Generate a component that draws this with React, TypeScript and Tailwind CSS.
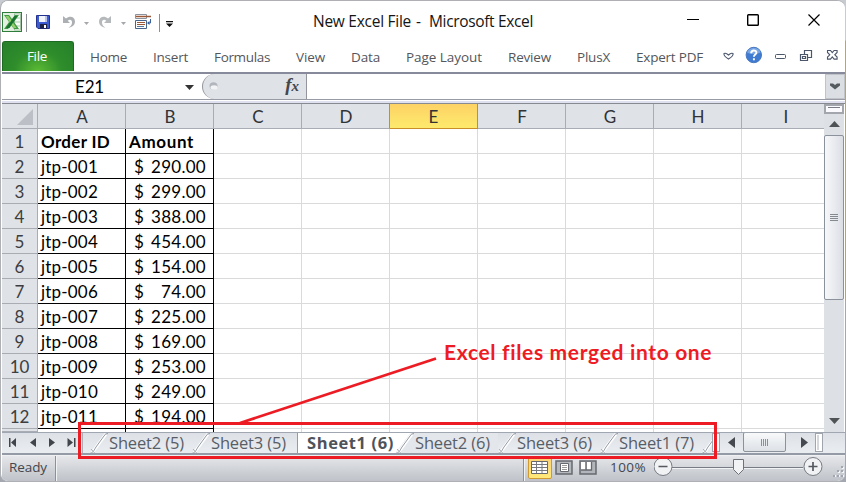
import { useLayoutEffect, useRef } from "react";
import type { ReactNode } from "react";

/** Single-line text, tracked so that it fills a fixed width. */
function Fit({ width, className = "", children }: { width: number; className?: string; children: string }) {
  const ref = useRef<HTMLSpanElement>(null);
  useLayoutEffect(() => {
    const el = ref.current;
    if (!el) return;
    el.style.letterSpacing = "0px";
    const natural = el.getBoundingClientRect().width;
    el.style.letterSpacing = `${(width - natural) / children.length}px`;
  }, [width, children]);
  return (
    <span className="block shrink-0 whitespace-nowrap" style={{ width }}>
      <span ref={ref} className={`inline-block whitespace-pre ${className}`}>
        {children}
      </span>
    </span>
  );
}

const UI = "font-['Open_Sans','Noto_Sans',sans-serif]";
const CELL = "font-['Lato',sans-serif]";

function Divider({ className = "" }: { className?: string }) {
  return <span className={`h-[18px] w-px bg-[#8d9096] ${className}`} />;
}

function TitleBar() {
  return (
    <div className="flex h-10 shrink-0 items-start bg-white">
      <svg className="mt-[11px] h-5 w-5" viewBox="0 0 20 20">
        <rect x=".5" y=".5" width="19" height="19" fill="#e3efe0" stroke="#2e7d3b" />
        <rect x="12.5" y="2" width="6" height="16" fill="#f8fcf7" stroke="#8fb893" strokeWidth=".8" />
        <path d="M13 6h5M13 10h5M13 14h5" stroke="#a9c9ab" />
        <path d="M2 3h5l3 4 3-4h4l-5 7 5 7h-5l-3-4-3 4H2l5-7z" fill="#3f9a45" />
        <path d="M3.500 4h3l8 12h-3z" fill="#95cf6c" />
        <path d="M12.500 4h3l-8 12H4z" fill="#17732f" />
      </svg>
      <Divider className="mt-[13px] ml-1" />
      <svg className="mt-[14px] ml-[9px] h-[14px] w-[14px]" viewBox="0 0 14 14">
        <path d="M.5.5h13v13H2L.5 12z" fill="#3c5bd0" stroke="#23328c" />
        <path d="M3 1h8v6H3z" fill="#f3f5fc" />
        <path d="M9 1h2v6H9z" fill="#b9c4ee" />
        <path d="M4 9h7v4.500H4z" fill="#1e2448" />
        <path d="M8 10h2v3H8z" fill="#fff" />
      </svg>
      <svg className="mt-[14px] ml-[13px] h-[14px] w-[12px]" viewBox="0 0 12 14">
        <path d="M0 1v7h7L4.700 5.700C7 3.500 9.500 5 9 8c-.3 2-1.500 3.500-3.500 4.500C9 12.500 12 10 12 6.500 12 2 7 .2 3 3.500z" fill="#adb0b3" />
      </svg>
      <svg className="mt-[21px] ml-[9px] h-[3px] w-[5px]" viewBox="0 0 5 3"><path d="M0 0h5L2.500 3z" fill="#a5a7aa" /></svg>
      <svg className="mt-[14px] ml-[10px] h-[14px] w-[12px]" viewBox="0 0 12 14">
        <path d="M12 1v7H5l2.300-2.300C5 3.500 2.500 5 3 8c.3 2 1.500 3.500 3.500 4.500C3 12.500 0 10 0 6.500 0 2 5 .2 9 3.500z" fill="#b6b9bc" />
      </svg>
      <svg className="mt-[21px] ml-[10px] h-[3px] w-[5px]" viewBox="0 0 5 3"><path d="M0 0h5L2.500 3z" fill="#a5a7aa" /></svg>
      <svg className="mt-[13px] ml-[9px] h-4 w-[17px]" viewBox="0 0 17 16">
        <path d="M.5.5h11v4H.5z" fill="#fff" stroke="#89929f" />
        <path d="M1 2.500h15" stroke="#9b5937" strokeWidth="1.400" />
        <path d="M.5 6.500h11v8H.5z" fill="#fff" stroke="#46648c" />
        <path d="M2 8.500h8M2 10.500h8" stroke="#9b5937" />
        <path d="M2 12.500h7" stroke="#56789f" />
        <path d="M15.500 5v4h-2" fill="none" stroke="#3b629b" />
        <path d="M12 9l2.500-2v4z" fill="#3b629b" />
      </svg>
      <Divider className="mt-[13px] ml-[7px]" />
      <svg className="mt-5 ml-[6px] h-[6px] w-[7px]" viewBox="0 0 7 6">
        <path d="M0 0h7v1.200H0zM0 2.500h7L3.500 6z" fill="#111" />
      </svg>
      <div className={`mt-[8px] ml-[140px] flex text-[15.500px] leading-6 text-[#151515] ${UI}`}>
        <Fit width={98}>New Excel File</Fit>
        <span className="ml-[5px] w-[13px]">-</span>
        <Fit width={104}>Microsoft Excel</Fit>
      </div>
      <svg className="mt-[12px] ml-[154px] h-[14px] w-[134px]" viewBox="0 0 134 14" fill="none" stroke="#000">
        <path d="M0 6.500h12" />
        <rect x="60.700" y="1.700" width="10.600" height="10.600" rx=".8" strokeWidth="1.400" />
        <path d="M121.500 1.500l11 11M132.500 1.500l-11 11" strokeWidth="1.200" />
      </svg>
    </div>
  );
}

const menus: [string, number][] = [
  ["Home", 37], ["Insert", 35], ["Formulas", 56], ["View", 29], ["Data", 29],
  ["Page Layout", 76], ["Review", 43], ["PlusX", 33], ["Expert PDF", 67],
];

function MenuRow() {
  return (
    <div className={`flex h-[31px] shrink-0 bg-white text-[13.500px] leading-[32px] ${UI}`}>
      <div className="flex h-[30px] w-[72px] justify-center rounded-t-[3px] border border-b-0 border-[#1d6b22] bg-[radial-gradient(ellipse_at_bottom,#5cba35_0%,#2f8d2b_48%,#26802a_100%)] pr-[2px] leading-[29px] text-white">
        <Fit width={20} className="font-medium">File</Fit>
      </div>
      <div className="ml-4 flex gap-[26px] text-[#54565b]">
        {menus.map(([name, w]) => (
          <Fit key={name} width={w}>{name}</Fit>
        ))}
      </div>
      <svg className="ml-[19px] h-[31px] w-[118px]" viewBox="722 41 118 31" fill="none" stroke="#4c566b">
        <path d="M724 53.500c2-1 3 0 4.500 1.500 1.500-1.500 2.500-2.500 4.500-1.500.6 2-2 4-4.500 5.500-2.500-1.500-5-3.500-4.500-5.500z" strokeWidth="1.100" />
        <circle cx="753.800" cy="55" r="7.700" fill="#3f7bd0" stroke="#4878c0" />
        <path d="M747 52.500a7 6 0 0 1 13.600 0q-7 3-13.600 0" fill="#79a7e6" stroke="none" />
        <path d="M751.200 53.200c0-3.600 5.400-3.400 5.200-.4-.1 1.700-2.500 1.800-2.500 4M753.900 58.300v1.900" stroke="#fff" strokeWidth="1.900" />
        <rect x="775.500" y="54.500" width="10" height="4" rx="1" />
        <path d="M804.500 54.500v-4h7v7h-4M800.500 54.500h7v6h-7zM802.500 56.500h3v2h-3z" strokeWidth="1.200" />
        <path d="M827.500 50.500h3l1.800 2.200 1.800-2.200h3v2l-2.300 2.300 2.300 2.300v2h-3l-1.800-2.200-1.800 2.200h-3v-2l2.300-2.300-2.300-2.300z" strokeWidth="1.100" />
      </svg>
    </div>
  );
}

function FormulaBar() {
  return (
    <>
      <div className="h-[2px] shrink-0 bg-[#878a9b]" />
      <div className="flex h-[25px] shrink-0 bg-white">
        <div className={`ml-[73px] w-[110px] text-[17px] leading-[26px] text-black ${CELL}`}>
          <Fit width={29}>E21</Fit>
        </div>
        <svg className="mt-[11px] h-[5px] w-[9px]" viewBox="0 0 9 5"><path d="M0 0h9L4.500 5z" fill="#333" /></svg>
        <div className="ml-2 flex w-[105px] justify-between rounded-l-full border-r border-l border-[#92969c] bg-[#dfe2e7]">
          <svg className="mt-2 ml-[6px] h-2 w-[9px]" viewBox="0 0 9 8">
            <ellipse cx="4.500" cy="4" rx="4" ry="3.700" fill="#b2b6bc" />
            <ellipse cx="5" cy="5.500" rx="3.500" ry="2.300" fill="#f1f3f5" />
          </svg>
          <span className="mr-[7px] font-['Liberation_Serif',serif] text-[19px] leading-[22px] font-bold text-[#44474b] italic">
            f<span className="text-[15px]">x</span>
          </span>
        </div>
        <div className="flex-1" />
        <div className="flex w-[20px] items-center justify-center border border-[#c0c4ca] bg-[#dbdfe4]">
          <svg className="h-[7px] w-[10px]" viewBox="0 0 10 7"><path d="M0 .5h3L5 2l2-1.500h3v2L5 6.500 0 2.500z" fill="#555a5e" /></svg>
        </div>
      </div>
      <div className="h-px shrink-0 bg-[#989ba3]" />
      <div className="h-px shrink-0 bg-white" />
      <div className="h-[2px] shrink-0 bg-[#dfe0f0]" />
      <div className="h-px shrink-0 bg-[#878a90]" />
    </>
  );
}

const columns = ["A", "B", "C", "D", "E", "F", "G", "H", "I"];
const amounts = [
  "290.00", "299.00", "388.00", "454.00", "154.00", "74.00",
  "225.00", "169.00", "253.00", "249.00", "194.00",
];

function Row({ index }: { index: number }) {
  const last = index === 13;
  const amount = amounts[index - 2];
  return (
    <div className={`flex shrink-0 text-[17px] leading-[26px] ${CELL} ${last ? "h-[3px] overflow-hidden" : "h-[25px]"}`}>
      <div className="w-9 shrink-0 border-r border-b border-[#a9adb3] bg-[#dfe2e7] text-center text-[#3c3d40]">
        {last ? "" : index}
      </div>
      <div className={`w-[88px] shrink-0 border-r border-black pl-[3px] text-black ${last ? "" : "border-b"}`}>
        {index === 1 ? <Fit width={69} className="font-bold">Order ID</Fit> : !last && <Fit width={57}>{`jtp-${String(index - 1).padStart(3, "0")}`}</Fit>}
      </div>
      <div className={`flex w-[88px] shrink-0 border-r border-black text-black ${last ? "" : "border-b"}`}>
        {index === 1 ? (
          <span className="pl-[3px]"><Fit width={65} className="font-bold">Amount</Fit></span>
        ) : !last && (
          <>
            <span className="w-[9px] flex-1 pl-2">$</span>
            <Fit width={amount.length === 5 ? 45 : 55}>{amount}</Fit>
            <span className="w-[7px]" />
          </>
        )}
      </div>
      {columns.slice(2).map((c) => (
        <div key={c} className={`shrink-0 border-[#d9dadc] ${last ? "" : "border-b"} ${c === "I" ? "w-[82px]" : "w-[88px] border-r"}`} />
      ))}
    </div>
  );
}

function VerticalScroll() {
  return (
    <div className="flex w-[20px] shrink-0 flex-col items-center bg-[#dde1e6]">
      <div className="flex h-[10px] w-full justify-center border-2 border-[#a3a6ad] bg-[#fafaff]">
        <span className="mt-px h-px w-3 bg-[#777c88]" />
      </div>
      <svg className="mt-[7px] h-[6px] w-[11px]" viewBox="0 0 11 6"><path d="M5.500 0L11 6H0z" fill="#505356" /></svg>
      <div className="mt-2 flex h-[165px] w-full flex-col items-center justify-center gap-px rounded-[2px] border border-[#8c929b] bg-gradient-to-r from-[#f7f8fa] to-[#dbdfe5]">
        <i className="h-px w-2 bg-[#858990]" />
        <i className="h-px w-2 bg-[#858990]" />
        <i className="h-px w-2 bg-[#858990]" />
        <i className="h-px w-2 bg-[#858990]" />
      </div>
      <svg className="mt-[118px] h-[6px] w-[11px]" viewBox="0 0 11 6"><path d="M0 0h11L5.500 6z" fill="#505356" /></svg>
    </div>
  );
}

function Sheet() {
  return (
    <div className="flex h-[328px] shrink-0 bg-white">
      <div className="flex w-[822px] flex-col overflow-hidden">
        <div className={`flex h-[25px] shrink-0 text-center text-[17px] leading-[26px] text-[#303236] ${CELL}`}>
          <div className="flex w-9 items-end justify-end border-r border-b border-[#a9adb3] bg-[#dfe2e7] pr-1 pb-[3px]">
            <svg className="h-4 w-4" viewBox="0 0 16 16"><path d="M16 0v16H0z" fill="#bcc0c6" /></svg>
          </div>
          {columns.map((c) => (
            <div
              key={c}
              className={
                c === "E"
                  ? "w-[88px] border-r border-b border-[#c98e27] bg-gradient-to-b from-[#fdd266] to-[#fdea6c]"
                  : `border-b bg-[#dfe2e7] ${c === "I" ? "w-[82px] border-[#a9adb3] pl-[6px]" : c === "D" ? "w-[88px] border-r border-r-[#c98e27] border-b-[#a9adb3] pl-px" : "w-[88px] border-r border-[#a9adb3] pl-px"}`
              }
            >
              {c}
            </div>
          ))}
        </div>
        {Array.from({ length: 13 }, (_, i) => <Row key={i} index={i + 1} />)}
      </div>
      <VerticalScroll />
    </div>
  );
}

function Slant() {
  return (
    <svg className="h-[21px] w-[19px] shrink-0" viewBox="0 0 19 21" fill="none">
      <path d="M2 20L16 1" stroke="#fff" strokeWidth="3" />
      <path d="M0 20.500C4 19 4 17 6 14l8-11q1-2.500 4-2.500" stroke="#949aa4" />
      <path d="M1 16l4 4.500" stroke="#a9afb8" />
    </svg>
  );
}

function SheetTab({ name, beforeActive = false, afterActive = false }: { name: string; beforeActive?: boolean; afterActive?: boolean }) {
  return (
    <div className={`flex shrink-0 ${beforeActive ? "w-[106px] border-r border-[#949aa4]" : "w-[102px]"} ${afterActive ? "bg-[linear-gradient(127deg,#fff_11px,#e3e6eb_12px)]" : ""}`}>
      <Slant />
      <Fit width={75}>{name}</Fit>
    </div>
  );
}

function ScrollStop() {
  return (
    <span className="h-[19px] w-[8px] border border-[#a0a5ad] bg-white p-px">
      <i className="block h-full w-full border-l-2 border-[#d4d8dd]" />
    </span>
  );
}

function TabStrip() {
  return (
    <>
      <div className={`flex h-[21px] shrink-0 overflow-hidden border-t border-[#a1a7b0] bg-gradient-to-b from-[#dde1e7] to-[#eaedf0] text-[16.500px] leading-[20px] text-[#585e68] ${UI}`}>
        <svg className="h-5 w-[80px] shrink-0" viewBox="2 433 80 20" fill="#42464c">
          <path d="M9 438h1.500v9H9zM16 438v9l-5-4.500zM36 438v9l-6-4.500zM49 438v9l6-4.500zM67.500 438v9l5.500-4.500zM74 438h1.500v9H74z" />
        </svg>
        <span className="w-2 border-l border-[#a9afb7]" />
        <SheetTab name="Sheet2 (5)" />
        <SheetTab name="Sheet3 (5)" beforeActive />
        <div className="-mt-px h-[21px] w-[98px] shrink-0 bg-white pt-px pl-[9px] font-bold text-[#4e5259]">
          <Fit width={87}>Sheet1 (6)</Fit>
        </div>
        <SheetTab name="Sheet2 (6)" afterActive />
        <SheetTab name="Sheet3 (6)" />
        <SheetTab name="Sheet1 (7)" />
        <span className="w-[10px] overflow-hidden"><Slant /></span>
        <ScrollStop />
        <svg className="mt-[4px] ml-2 h-[11px] w-[7px] shrink-0" viewBox="0 0 7 11"><path d="M7 0v11L0 5.500z" fill="#464a50" /></svg>
        <div className="-mt-px ml-[8px] flex h-[20px] w-[43px] shrink-0 items-center justify-center gap-px rounded-[2px] border border-[#8c929b] bg-gradient-to-b from-[#f8f9fa] to-[#dde1e6]">
          <i className="h-[7px] w-px bg-[#8b9097]" />
          <i className="h-[7px] w-px bg-[#8b9097]" />
          <i className="h-[7px] w-px bg-[#8b9097]" />
          <i className="h-[7px] w-px bg-[#8b9097]" />
        </div>
        <svg className="mt-[4px] ml-[15px] h-[11px] w-[7px] shrink-0" viewBox="0 0 7 11"><path d="M0 0v11l7-5.500z" fill="#464a50" /></svg>
        <span className="w-[7px]" />
        <ScrollStop />
      </div>
      <div className="h-[2px] shrink-0 bg-[#949ba6]" />
      <div className="h-px shrink-0 bg-[#eef0f2]" />
    </>
  );
}

function ViewButton({ children, active = false }: { children: ReactNode; active?: boolean }) {
  return (
    <span className={`flex h-[23px] w-6 shrink-0 items-center justify-center ${active ? "rounded-[2px] border border-[#d19a31] bg-gradient-to-b from-[#fbd277] to-[#ffe87a]" : ""}`}>
      <svg className="h-[15px] w-[18px]" viewBox="0 0 18 15" fill="none">{children}</svg>
    </span>
  );
}

function StatusBar() {
  return (
    <div className={`flex h-[25px] shrink-0 bg-gradient-to-b from-[#e5e7ea] to-[#bfc3c9] text-[13.500px] leading-[23px] text-[#44474d] ${UI}`}>
      <span className="ml-[7px]"><Fit width={38}>Ready</Fit></span>
      <span className="ml-[8px] h-[25px] w-[2px] border-l border-[#8c9198] bg-[#f1f2f3]" />
      <span className="ml-[466px] h-[25px] w-[2px] border-l border-[#8c9198] bg-[#f1f2f3]" />
      <span className="ml-[3px] flex">
        <ViewButton active>
          <path d="M.5 1.500h16v12H.5z" fill="#fff" stroke="#65686d" />
          <path d="M1 4.500h15M1 7.500h15M1 10.500h15M5.500 2v11M11 2v11" stroke="#777a7e" />
        </ViewButton>
        <ViewButton>
          <path d="M1 1h16v13H1z" fill="#b5b8bc" stroke="#666a70" strokeWidth="1.500" />
          <path d="M5.500 3.500h8v8h-8z" fill="#fff" stroke="#666a70" />
          <path d="M7 5.500h5M7 7.500h5M7 9.500h5" stroke="#999" />
        </ViewButton>
        <ViewButton>
          <path d="M1 1h16v13H1z" fill="#b2b5ba" stroke="#666a70" strokeWidth="1.500" />
          <path d="M2 2h4.500v8H2zM8 2h4v8H8z" fill="#fff" />
          <path d="M7 2v8H2M12.500 2v8H7" stroke="#666a70" strokeWidth="1.300" />
        </ViewButton>
      </span>
      <span className="ml-[10px]"><Fit width={36}>100%</Fit></span>
      <svg className="ml-2 h-[25px] w-[190px]" viewBox="654 456 190 25" fill="none">
        <path d="M672 467.500h131" stroke="#777c84" />
        <path d="M672 468.500h131" stroke="#f2f3f4" />
        <circle cx="663" cy="466.500" r="9" fill="#f1f2f4" stroke="#777b83" />
        <circle cx="813" cy="466.500" r="9" fill="#f1f2f4" stroke="#777b83" />
        <path d="M658.500 466.500h9M808.500 466.500h9M813 462v9" stroke="#55595f" strokeWidth="1.700" />
        <path d="M733.500 459.500h10v10l-5 5-5-5z" fill="#f2f3f5" stroke="#6d727a" />
        <path d="M842 467h2v2h-2zM838 471h2v2h-2zM842 471h2v2h-2zM834 475h2v2h-2zM838 475h2v2h-2zM842 475h2v2h-2z" fill="#f5f6f7" />
        <path d="M841 466h2v2h-2zM837 470h2v2h-2zM841 470h2v2h-2zM833 475h2v2h-2zM837 475h2v2h-2zM841 475h2v2h-2z" fill="#a2a7af" />
      </svg>
    </div>
  );
}

function Annotation() {
  return (
    <>
      <svg className="pointer-events-none absolute inset-0 h-full w-full" viewBox="0 0 846 482" fill="none" stroke="#ed1c24" strokeWidth="3">
        <rect x="79.500" y="423.500" width="636" height="34" />
        <path d="M240 423L436 358.500" strokeWidth="2.800" />
      </svg>
      <div className={`absolute top-[338px] left-[444px] text-[21px] leading-[28px] font-bold text-[#ed1c24] ${CELL}`}>
        <Fit width={268}>Excel files merged into one</Fit>
      </div>
    </>
  );
}

export default function App() {
  return (
    <div className="relative h-[482px] w-[846px] overflow-hidden bg-[linear-gradient(to_bottom,#c8cbd0_0,#c8cbd0_40px,#b9a760_41px,#b9a760_300px,#a4a7b0_301px)]">
      <div className="flex h-full w-[845px] flex-col overflow-hidden rounded-[8px] border border-r-0 border-[#aeb0b4] bg-white pl-px">
        <TitleBar />
        <MenuRow />
        <FormulaBar />
        <Sheet />
        <TabStrip />
        <StatusBar />
      </div>
      <Annotation />
    </div>
  );
}
